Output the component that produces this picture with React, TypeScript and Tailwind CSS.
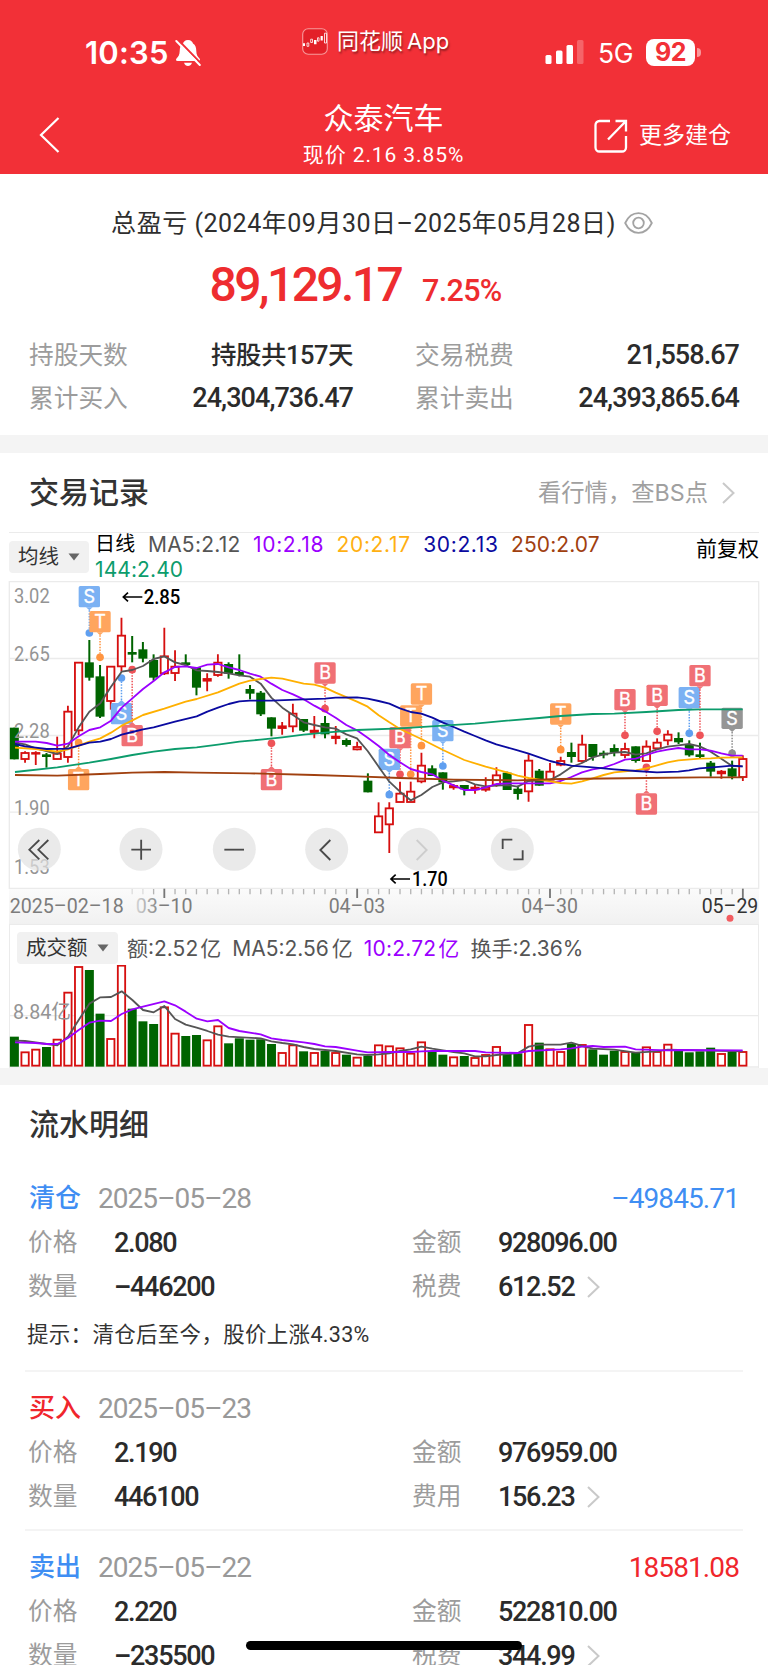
import clsx from "clsx";

// [up, bodyTop, bodyBottom, high, low, volumeTop]
const CANDLES: [number, number, number, number, number, number][] = [
  [0, 458, 553, 458, 553, 350], [1, 533, 553, 529, 563, 396], [1, 533, 537, 529, 570, 388], [0, 538, 546, 534, 578, 381],
  [1, 535, 553, 485, 553, 358], [1, 409, 547, 392, 563, 217], [1, 262, 467, 262, 480, 140], [0, 262, 308, 195, 317, 150],
  [0, 304, 425, 270, 429, 281], [1, 274, 379, 274, 404, 356], [1, 181, 275, 128, 290, 136], [0, 231, 239, 183, 262, 266],
  [0, 223, 251, 201, 262, 304], [0, 255, 308, 238, 317, 312], [1, 243, 296, 158, 300, 261], [1, 274, 295, 226, 318, 340],
  [0, 262, 270, 238, 275, 348], [0, 277, 338, 277, 361, 345], [1, 311, 318, 295, 349, 360], [1, 262, 301, 238, 305, 318],
  [0, 267, 296, 262, 311, 370], [0, 291, 300, 238, 304, 355], [0, 342, 356, 330, 373, 359], [0, 353, 418, 348, 423, 358],
  [0, 427, 461, 427, 484, 372], [1, 453, 460, 441, 479, 398], [1, 415, 455, 386, 472, 375], [0, 432, 467, 432, 471, 394],
  [1, 466, 472, 423, 490, 398], [0, 444, 478, 423, 490, 393], [1, 484, 490, 453, 508, 398], [0, 495, 510, 490, 515, 404],
  [1, 515, 524, 500, 526, 412], [0, 617, 652, 595, 652, 407], [1, 723, 773, 682, 773, 375], [1, 699, 749, 682, 834, 378],
  [1, 655, 682, 620, 682, 384], [1, 649, 682, 620, 682, 400], [1, 571, 620, 533, 625, 366], [0, 580, 603, 571, 603, 396],
  [0, 592, 622, 592, 644, 404], [1, 632, 638, 627, 644, 411], [0, 630, 643, 630, 661, 408], [1, 637, 644, 627, 656, 413],
  [1, 637, 645, 607, 650, 404], [1, 600, 630, 577, 635, 380], [0, 593, 645, 590, 645, 402], [0, 641, 657, 632, 674, 400],
  [1, 556, 650, 538, 680, 314], [0, 587, 632, 582, 632, 368], [1, 589, 615, 564, 615, 387], [1, 557, 570, 545, 574, 395],
  [0, 531, 546, 503, 563, 371], [1, 508, 559, 479, 563, 374], [0, 507, 546, 507, 557, 388], [0, 533, 541, 527, 550, 404],
  [0, 519, 533, 508, 544, 392], [1, 521, 541, 503, 550, 395], [0, 514, 558, 514, 563, 398], [1, 514, 559, 496, 559, 381],
  [1, 502, 521, 490, 521, 395], [1, 478, 497, 466, 511, 373], [0, 489, 502, 472, 507, 392], [0, 508, 541, 496, 545, 397],
  [0, 538, 546, 503, 550, 394], [0, 563, 590, 558, 605, 383], [1, 589, 596, 585, 611, 401], [0, 580, 605, 557, 613, 396],
  [1, 551, 607, 541, 618, 395],
];

const MA_LINES = [
  { color: "#555555", points: "45,503 75,508 107,520 139,528 172,537 204,514 236,457 268,410 301,385 333,335 365,290 397,285 429,273 461,252 493,244 525,262 557,270 590,286 622,288 654,291 686,295 718,301 750,305 782,326 814,368 847,398 879,420 911,442 943,450 975,457 1007,461 1039,478 1071,490 1103,528 1136,575 1168,620 1200,650 1232,676 1264,660 1297,636 1329,622 1361,619 1393,615 1425,628 1457,634 1489,632 1521,630 1553,635 1586,618 1618,616 1650,615 1682,598 1714,576 1746,564 1778,547 1811,538 1843,533 1875,531 1907,539 1939,535 1971,523 2003,515 2035,511 2067,507 2099,514 2132,530 2164,551 2196,573 2228,574" },
  { color: "#9b00ff", points: "45,500 107,500 140,504 172,512 204,506 236,484 268,465 301,457 333,437 365,398 397,370 429,342 461,318 493,292 525,276 557,274 590,279 622,269 654,267 686,277 718,285 750,296 782,305 814,326 847,345 879,358 911,373 943,392 975,409 1007,428 1039,450 1071,466 1103,488 1136,513 1168,540 1200,562 1232,582 1264,591 1297,598 1329,617 1361,631 1393,645 1425,645 1457,637 1489,627 1521,625 1650,625 1682,618 1714,606 1746,592 1778,583 1811,578 1843,567 1875,554 1907,551 1939,540 1971,530 2003,524 2035,519 2067,523 2099,523 2132,527 2164,535 2196,542 2228,542" },
  { color: "#ffb000", points: "45,518 107,522 172,530 204,523 236,512 268,500 301,490 333,473 365,452 397,436 429,420 493,401 557,380 590,372 654,352 718,326 750,317 782,312 814,308 847,311 911,326 943,329 975,338 1007,353 1071,380 1103,395 1136,421 1168,442 1200,462 1264,492 1329,525 1393,555 1457,575 1521,592 1553,602 1586,609 1650,619 1682,624 1714,626 1746,619 1778,610 1811,600 1843,592 1907,586 1939,580 1971,571 2003,562 2035,556 2099,551 2132,550 2164,548 2228,547" },
  { color: "#0a0aa0", points: "45,507 75,514 107,518 140,522 204,521 236,512 268,503 301,500 333,492 365,479 397,471 429,463 461,457 525,440 590,424 622,410 654,398 686,387 718,379 750,377 814,377 911,373 975,371 1007,368 1071,367 1103,371 1136,378 1168,386 1200,400 1232,411 1264,416 1297,428 1329,443 1361,456 1393,470 1425,483 1457,496 1489,508 1521,517 1553,526 1586,536 1618,547 1650,558 1682,566 1714,572 1778,577 1843,583 1907,588 1971,592 2035,590 2067,586 2099,580 2164,575 2196,572 2228,574" },
  { color: "#0c9c6c", points: "45,591 172,577 268,563 333,552 397,540 461,530 525,522 590,517 654,509 718,500 782,494 847,487 911,479 975,473 1071,465 1200,460 1329,452 1425,446 1521,437 1618,429 1682,423 1778,417 1843,416 1939,411 2035,405 2100,403 2228,403" },
  { color: "#a0400f", points: "45,600 172,602 301,597 397,593 493,591 590,593 750,595 943,600 1071,604 1200,609 1361,614 1553,616 1682,612 1939,609 2100,607 2228,607" },
];

const VOL_LINES = [
  { color: "#555555", points: "45,362 75,363 107,367 140,372 172,376 204,350 236,300 268,251 301,232 333,231 365,214 397,240 429,270 461,277 493,258 525,297 557,314 590,323 622,333 654,344 686,350 782,355 814,364 847,369 879,373 911,381 943,387 1007,393 1071,403 1103,405 1136,403 1168,400 1200,393 1232,388 1264,380 1297,386 1329,391 1361,396 1393,400 1425,409 1457,409 1489,405 1521,402 1553,400 1586,380 1618,374 1682,374 1714,368 1746,378 1778,386 1843,389 1907,398 1971,394 2003,389 2228,394" },
  { color: "#9b00ff", points: "45,367 107,369 140,372 172,372 204,354 236,330 268,308 301,302 333,303 365,282 397,268 429,260 493,244 525,256 557,275 590,296 622,304 654,300 686,324 718,333 782,343 814,355 847,360 911,367 943,372 975,379 1007,381 1071,392 1103,397 1168,396 1232,396 1264,394 1297,393 1425,393 1457,397 1553,399 1586,393 1682,388 1714,385 1746,380 1778,378 1811,381 1875,380 1907,388 2003,391 2035,390 2228,391" },
];

const MARKERS = [
  { kind: "S", i: 7, top: 33, dot: 174 },
  { kind: "T", i: 8, top: 108, dot: 247 },
  { kind: "S", i: 10, top: 384, dot: 309 },
  { kind: "B", i: 11, top: 450, dot: 284 },
  { kind: "T", i: 6, top: 582, dot: 503 },
  { kind: "B", i: 24, top: 582, dot: 505 },
  { kind: "B", i: 29, top: 262, dot: 401 },
  { kind: "T", i: 37, top: 391, dot: 598 },
  { kind: "B", i: 36, top: 456, dot: 598 },
  { kind: "S", i: 35, top: 521, dot: 659 },
  { kind: "T", i: 38, top: 325, dot: 512 },
  { kind: "S", i: 40, top: 435, dot: 573 },
  { kind: "T", i: 51, top: 385, dot: 524 },
  { kind: "B", i: 57, top: 342, dot: 481 },
  { kind: "B", i: 60, top: 329, dot: 469 },
  { kind: "B", i: 59, top: 655, dot: 577 },
  { kind: "S", i: 63, top: 336, dot: 475 },
  { kind: "B", i: 64, top: 270, dot: 481 },
  { kind: "N", i: 67, top: 398, dot: 535 },
];

const MARKER_STYLE: Record<string, { text: string; box: string; dot: string }> = {
  S: { text: "S", box: "#7bb1f3", dot: "#5f9ff0" },
  T: { text: "T", box: "#ffa55e", dot: "#ff9440" },
  B: { text: "B", box: "#f07075", dot: "#ee5358" },
  N: { text: "S", box: "#959595", dot: "#8c8c8c" },
};

const RED = "#d60f0f";
const GREEN = "#006400";
const GRID = "#ebebeb";
const cx = (i: number) => 43 + i * 32.14;

function Marker({ kind, i, top, dot }: { kind: string; i: number; top: number; dot: number }) {
  const s = MARKER_STYLE[kind];
  const x = cx(i);
  const above = top < dot;
  const edge = above ? top + 64 : top;
  const tip = above ? edge + 9 : edge - 9;
  return (
    <g>
      <line x1={x} y1={tip} x2={x} y2={dot} stroke={s.dot} strokeWidth={4.5} strokeDasharray="4.5 4" />
      <circle cx={x} cy={dot} r={11.5} fill={s.dot} />
      <rect x={x - 32} y={top} width={64} height={64} rx={5} fill={s.box} />
      <path d={`M${x - 10} ${edge}L${x} ${tip}L${x + 10} ${edge}Z`} fill={s.box} />
      <text x={x} y={top + 51} textAnchor="middle" fontSize={54} fill="#fff" stroke="#fff" strokeWidth={1} fontFamily="Inter">{s.text}</text>
    </g>
  );
}

function Lines({ lines }: { lines: { color: string; points: string }[] }) {
  return (
    <>
      {lines.map((l, n) => (
        <polyline key={n} points={l.points} fill="none" stroke={l.color} strokeWidth={5.5} strokeLinejoin="round" />
      ))}
    </>
  );
}

function Label({ x, y, w, children, fill = "#949494", weight = 400 }: { x: number; y: number; w: number; children: string; fill?: string; weight?: number }) {
  return (
    <text x={x} y={y} textLength={w} lengthAdjust="spacingAndGlyphs" fontSize={60} fontWeight={weight} fill={fill} fontFamily="Roboto, 'Noto Sans CJK SC', sans-serif">
      {children}
    </text>
  );
}

function KLine() {
  return (
    <svg viewBox="0 18 2304 1029" className="block h-[343px] w-full">
      <defs>
        <linearGradient id="axis" x1="0" x2="0" y1="0" y2="1">
          <stop offset="0" stopColor="#fbfbfb" />
          <stop offset="1" stopColor="#f1f1f1" />
        </linearGradient>
        <linearGradient id="fade" x1="0" x2="1" y1="0" y2="0">
          <stop offset="0" stopColor="#d5d5d5" />
          <stop offset="0.45" stopColor="#7c7c7c" />
        </linearGradient>
      </defs>
      <rect x={27} y={940} width={2250} height={107} fill="url(#axis)" />
      <path d="M28 20H2276V940H28ZM28 250.5H2276M28 481.5H2276M28 711.5H2276" fill="none" stroke={GRID} strokeWidth={4} />

      {CANDLES.map(([up, top, bottom, high, low], i) => {
        const x = cx(i);
        return up ? (
          <g key={i} stroke={RED} strokeWidth={5.5}>
            <path d={`M${x} ${high}V${top}M${x} ${bottom}V${low}`} />
            <rect x={x - 11} y={top + 1} width={22} height={Math.max(bottom - top - 2, 2)} fill="#fff" />
          </g>
        ) : (
          <g key={i} fill={GREEN}>
            <rect x={x - 3} y={high} width={6} height={low - high} />
            <rect x={x - 13.5} y={top} width={27} height={bottom - top} />
          </g>
        );
      })}

      <Label x={42} y={83} w={107}>3.02</Label>
      <Label x={42} y={259} w={107}>2.65</Label>
      <Label x={42} y={489} w={107}>2.28</Label>
      <Label x={42} y={719} w={107}>1.90</Label>
      <Label x={42} y={896} w={107}>1.53</Label>

      {MARKERS.map((m) => <Marker key={`${m.kind}${m.i}`} {...m} />)}
      <Lines lines={MA_LINES} />

      <g stroke="#000" strokeWidth={5} fill="none">
        <path d="M427 66H370M384 53L370 66L384 79" />
        <path d="M1230 912H1173M1187 899L1173 912L1187 925" />
      </g>
      <Label x={431} y={87} w={110} fill="#000" weight={500}>2.85</Label>
      <Label x={1236} y={934} w={107} fill="#000" weight={500}>1.70</Label>

      {[118, 423, 703, 980, 1258, 1537].map((x) => (
        <circle key={x} cx={x} cy={823} r={64.5} fill="#e1e1e1" fillOpacity={0.7} />
      ))}
      <g fill="none" stroke="#4a4a4a" strokeWidth={5.5}>
        <path d="M118 795L88 824L118 853M145 795L115 824L145 853" />
        <path d="M394 824H453M423.500 794V854" />
        <path d="M673 824H732" />
        <path d="M991 795L961 825L991 855" />
        <path d="M1250 795L1280 825L1250 855" stroke="#cdcdcd" />
        <path d="M1508 822V794H1537M1540 853H1568V826" />
      </g>

      {CANDLES.map((_, i) =>
        i < 11 ? null : i % 18 === 14 ? (
          <path key={i} d={`M${cx(i)} 941V969`} stroke="#777" strokeWidth={5.5} />
        ) : (
          <path key={i} d={`M${cx(i)} 942V958`} stroke={i < 13 ? "#dcdcdc" : "#b4b4b4"} strokeWidth={4} />
        )
      )}
      <Label x={29} y={1013} w={342} fill="#7c7c7c">2025–02–18</Label>
      <Label x={407} y={1013} w={171} fill="url(#fade)">03–10</Label>
      <Label x={986} y={1013} w={170} fill="#7c7c7c">04–03</Label>
      <Label x={1564} y={1013} w={170} fill="#7c7c7c">04–30</Label>
      <Label x={2105} y={1013} w={170} fill="#333">05–29</Label>
      <circle cx={2190} cy={1030} r={10.5} fill="#f25c60" />
    </svg>
  );
}

function Volume() {
  return (
    <svg viewBox="0 135 2304 308" className="absolute bottom-0 left-0 block w-full" height="102.67">
      <path d="M28 287H2276M28 441H2276" stroke={GRID} strokeWidth={4} />
      {CANDLES.map(([up, , , , , top], i) =>
        up ? (
          <rect key={i} x={cx(i) - 11} y={top + 1} width={22} height={436 - top} fill="#fff" stroke={RED} strokeWidth={5.5} />
        ) : (
          <rect key={i} x={cx(i) - 13.5} y={top} width={27} height={440 - top} fill={GREEN} />
        )
      )}
      <Label x={39} y={297} w={174}>8.84亿</Label>
      <Lines lines={VOL_LINES} />
    </svg>
  );
}

function Chevron({ className }: { className?: string }) {
  return (
    <svg viewBox="0 0 13 22" className={clsx("h-[22px] w-[13px]", className)} fill="none" stroke="#c9c9c9" strokeWidth="2">
      <path d="M1 1L11.5 11L1 21" />
    </svg>
  );
}

function StatusBar() {
  return (
    <div className="flex h-[90px] items-start justify-between pr-[67px] pl-[85px] text-white">
      <div className="flex w-[217px] items-center pt-[33px]">
        <span className="font-[Inter] text-[31px] leading-[40px] font-semibold tracking-[0.2px]">10:35</span>
        <svg viewBox="0 0 26 28" className="ml-[6px] h-[28px] w-[26px]">
          <path d="M13 1C9.8 1 8.500 3 8 4.500C5.500 6 4.800 8.500 4.700 12C4.600 16 3.500 17.500 1.500 19.500C0.500 20.700 1 22 2.500 22H23.500C25 22 25.500 20.700 24.500 19.500C22.500 17.500 21.400 16 21.300 12C21.200 8.500 20.500 6 18 4.500C17.500 3 16.200 1 13 1ZM9 23.800C9.800 26 11.300 27 13 27C14.700 27 16.200 26 17 23.800Z" fill="#fff" />
          <path d="M3 0.800L26.500 25" stroke="#f23037" strokeWidth="2" />
          <path d="M1.300 2L24.800 26" stroke="#fff" strokeWidth="2" strokeLinecap="round" />
        </svg>
      </div>
      <div className="flex flex-1 items-center pt-[24px]">
        <svg viewBox="0 0 26 27" className="h-[27px] w-[26px]">
          <rect x="0.700" y="0.700" width="24.600" height="25.600" rx="5.500" fill="#e32028" stroke="#f79a9c" strokeWidth="1.100" />
          <path d="M1 15.300H3V18H1ZM12 12H14.500V16.300H12ZM18.600 8H20.800V12.500H18.600Z" fill="#fff" />
          <path d="M5 15H6.800V18.300H5ZM8.700 11.200H10.500V14.500H8.700ZM15.500 9.800H17V13.200H15.500ZM22.500 5.200H24.500V15H22.500Z" fill="none" stroke="#fff" strokeWidth="0.800" />
        </svg>
        <span className="ml-[9px] font-[Inter,'Noto_Sans_CJK_SC',sans-serif] text-[22px] leading-[34px] whitespace-nowrap text-shadow-[1px_2px_2px_rgb(0_0_0/0.4)]">
          同花顺<span className="ml-[4px]">App</span>
        </span>
      </div>
      <div className="flex items-center pt-[32px]">
        <svg viewBox="0 0 39 25" className="h-[25px] w-[39px]" fill="#fff">
          <rect x="0.500" y="15" width="6" height="9" rx="1.500" />
          <rect x="11" y="10.500" width="6.500" height="13.500" rx="1.500" />
          <rect x="21.500" y="5" width="6.500" height="19" rx="1.500" />
          <rect x="32" y="0" width="6.500" height="24" rx="1.500" opacity="0.250" />
        </svg>
        <span className="ml-[14px] pt-[2px] font-[Inter] text-[26.5px] leading-[38px] tracking-[-0.5px]">5G</span>
        <span className="ml-[13px] flex h-[27px] w-[49px] items-center justify-center rounded-[8px] bg-white font-[Inter] text-[25px] leading-none font-bold tracking-[-0.5px] text-[#f23037]">92</span>
        <span className="ml-[2px] h-[9px] w-[4px] rounded-r-full bg-white/50" />
      </div>
    </div>
  );
}

function Header() {
  return (
    <header className="h-[174px] bg-[#f23037]">
      <StatusBar />
      <div className="flex h-[84px] justify-between pr-[37px] pl-[39px] text-white">
        <svg viewBox="0 0 21 36" className="mt-[27px] h-[36px] w-[21px]" fill="none" stroke="#fff" strokeWidth="2.200">
          <path d="M19.500 1L2 18L19.500 35" />
        </svg>
        <div className="ml-[113px] flex flex-col items-center pt-[9px]">
          <h1 className="text-[30px] leading-[40px]">众泰汽车</h1>
          <p className="text-[21px] leading-[32px] tracking-[0.9px]">现价 2.16 3.85%</p>
        </div>
        <div className="flex items-center pt-[8px]">
          <svg viewBox="0 0 34 34" className="h-[34px] w-[34px]" fill="none" stroke="#fff" strokeWidth="2.300">
            <path d="M16 2H5.500A4 4 0 0 0 1.500 6V28.500A4 4 0 0 0 5.500 32.500H28A4 4 0 0 0 32 28.500V17" />
            <path d="M21.500 2H32V12.500M32 2L14 20.500" />
          </svg>
          <span className="ml-[11px] text-[23px] leading-[34px]">更多建仓</span>
        </div>
      </div>
    </header>
  );
}

function Stat({ label, value, cjk }: { label: string; value: string; cjk?: boolean }) {
  return (
    <div className="flex h-[43px] items-center justify-between">
      <span className="text-[24.7px] text-[#9c9c9c]">{label}</span>
      <span className={clsx("font-medium text-[#2b2b2b]", cjk ? "text-[25.5px] tracking-[-0.5px]" : "text-[27px] tracking-[-0.95px]")}>{value}</span>
    </div>
  );
}

function Summary() {
  return (
    <section className="h-[261px]">
      <div className="flex items-center justify-center pt-[30px] pr-[4px]">
        <span className="text-[25px] leading-[40px] tracking-[0.52px] text-[#2e2e2e]">总盈亏 (2024年09月30日–2025年05月28日)</span>
        <svg viewBox="0 0 29 22" className="mb-[2px] ml-[8px] h-[22px] w-[29px]" fill="none" stroke="#a3a3a3" strokeWidth="1.800">
          <path d="M1.200 11C4 5 8.500 1.200 14.500 1.200S25 5 27.800 11C25 17 20.500 20.800 14.500 20.800S4 17 1.200 11Z" />
          <circle cx="14.500" cy="11" r="5.300" />
        </svg>
      </div>
      <div className="flex h-[74px] items-baseline justify-center pt-[4px] pr-[57px] text-[#ee2c2f]">
        <span className="text-[48px] leading-[74px] font-medium tracking-[-2.6px]">89,129.17</span>
        <span className="ml-[21px] text-[30.5px] font-medium tracking-[-0.7px]">7.25%</span>
      </div>
      <div className="mt-[16px] grid grid-cols-2 gap-x-[62px] pr-[29px] pl-[29px]">
        <Stat label="持股天数" value="持股共157天" cjk />
        <Stat label="交易税费" value="21,558.67" />
        <Stat label="累计买入" value="24,304,736.47" />
        <Stat label="累计卖出" value="24,393,865.64" />
      </div>
    </section>
  );
}

function Picker({ label, className }: { label: string; className?: string }) {
  return (
    <span className={clsx("flex h-[32px] shrink-0 items-center justify-between rounded-[4px] bg-[#f1f1f1] pr-[9px] pl-[9px] text-[20.5px] leading-none text-[#333]", className)}>
      {label}
      <svg viewBox="0 0 12 8" className="h-[8px] w-[12px]" fill="#666"><path d="M0.500 0.500H11.500L6 7.500Z" /></svg>
    </span>
  );
}

function TradeChart() {
  return (
    <section className="h-[615px]">
      <div className="flex h-[79px] items-center justify-between pr-[33px] pl-[29px]">
        <h2 className="text-[30px] font-medium text-[#333]">交易记录</h2>
        <span className="flex items-center text-[23.3px] text-[#a0a0a0]">
          <span className="pt-[1px] font-[Inter,'Noto_Sans_CJK_SC',sans-serif]">看行情，查BS点</span>
          <Chevron className="ml-[14px]" />
        </span>
      </div>
      <div className="mx-[9px] flex h-[49px] justify-between border-t border-[#ebebeb] font-[Inter,'Noto_Sans_CJK_SC',sans-serif]">
        <Picker label="均线" className="mt-[8px] w-[80px]" />
        <div className="-mt-[1px] ml-[6px] flex flex-1 flex-wrap content-start gap-x-[12.5px] text-[21px] leading-[25px] tracking-[0.65px]">
          <span className="text-[20px] tracking-[0.2px] text-black">日线</span>
          <span className="tracking-[0.25px] text-[#555]">MA5:2.12</span>
          <span className="text-[#9b00ff]">10:2.18</span>
          <span className="text-[#ffb012]">20:2.17</span>
          <span className="text-[#0a0aa0]">30:2.13</span>
          <span className="tracking-[0.1px] text-[#a0400f]">250:2.07</span>
          <span className="tracking-[0.1px] text-[#0c9c6c]">144:2.40</span>
        </div>
        <span className="pt-[1px] text-[21px] leading-[30px] text-black">前复权</span>
      </div>
      <KLine />
      <div className="relative h-[144px]">
        <div className="mx-[9px] flex h-full items-start border-x border-t border-[#ebebeb] pt-[7px] font-[Inter,'Noto_Sans_CJK_SC',sans-serif] text-[21px] text-[#555]">
          <Picker label="成交额" className="ml-[7px] w-[101px]" />
          <div className="ml-[9px] flex gap-[11px] pt-[1px] leading-[32px] whitespace-nowrap">
            <span>额:2.52<span className="ml-[2px]">亿</span></span>
            <span>MA5:2.56<span className="ml-[3px]">亿</span></span>
            <span className="tracking-[0.2px] text-[#9b00ff]">10:2.72<span className="ml-[2px]">亿</span></span>
            <span>换手:2.36%</span>
          </div>
        </div>
        <Volume />
      </div>
    </section>
  );
}

interface Flow {
  type: string;
  date: string;
  color: string;
  profit?: string;
  price: string;
  total: string;
  count: string;
  feeLabel: string;
  fee: string;
  tip?: string;
}

const FLOWS: Flow[] = [
  { type: "清仓", date: "2025–05–28", color: "text-[#3f8ef3]", profit: "–49845.71", price: "2.080", total: "928096.00", count: "–446200", feeLabel: "税费", fee: "612.52", tip: "提示：清仓后至今，股价上涨4.33%" },
  { type: "买入", date: "2025–05–23", color: "text-[#f0262c]", price: "2.190", total: "976959.00", count: "446100", feeLabel: "费用", fee: "156.23" },
  { type: "卖出", date: "2025–05–22", color: "text-[#3f8ef3]", profit: "18581.08", price: "2.220", total: "522810.00", count: "–235500", feeLabel: "税费", fee: "344.99" },
];

function Cell({ label, value, more }: { label: string; value: string; more?: boolean }) {
  return (
    <div className="flex h-[44px] items-center">
      <span className="w-[86px] text-[24.7px] text-[#9c9c9c]">{label}</span>
      <span className="text-[27px] font-medium tracking-[-1.3px] text-[#2b2b2b]">{value}</span>
      {more && <Chevron className="ml-[13px]" />}
    </div>
  );
}

function FlowItem({ flow }: { flow: Flow }) {
  return (
    <li className={clsx("mx-[25px] border-b-2 border-[#f4f4f4] pt-[14px]", flow.tip ? "h-[210px]" : "h-[159px]")}>
      <div className="flex h-[45px] items-center pr-[4px] pl-[4px]">
        <span className={clsx("text-[26px] font-medium", flow.color)}>{flow.type}</span>
        <span className="ml-[17px] text-[28px] tracking-[-0.95px] text-[#999]">{flow.date}</span>
        <span className={clsx("ml-auto text-[28px] tracking-[-0.9px]", flow.profit?.startsWith("–") ? "text-[#3f8ef3]" : "text-[#f0262c]")}>{flow.profit}</span>
      </div>
      <div className="grid grid-cols-[384px_1fr] pl-[3px]">
        <Cell label="价格" value={flow.price} />
        <Cell label="金额" value={flow.total} />
        <Cell label="数量" value={flow.count} />
        <Cell label={flow.feeLabel} value={flow.fee} more />
      </div>
      {flow.tip && <p className="pt-[10px] pl-[2px] text-[21.5px] leading-[32px] tracking-[0.3px] text-[#333]">{flow.tip}</p>}
    </li>
  );
}

export default function App() {
  return (
    <div className="relative h-[1665px] w-[768px] overflow-hidden bg-white font-[Roboto,'Noto_Sans_CJK_SC',sans-serif]">
      <Header />
      <Summary />
      <div className="h-[18px] bg-[#f4f4f4]" />
      <TradeChart />
      <div className="h-[17px] bg-[#f4f4f4]" />
      <section>
        <h2 className="h-[77px] pt-[18px] pl-[29px] text-[30px] leading-[44px] font-medium text-[#333]">流水明细</h2>
        <ul>
          {FLOWS.map((f) => <FlowItem key={f.date} flow={f} />)}
        </ul>
      </section>
      <div className="absolute bottom-[15px] left-[246px] h-[9px] w-[276px] rounded-full bg-black" />
    </div>
  );
}
